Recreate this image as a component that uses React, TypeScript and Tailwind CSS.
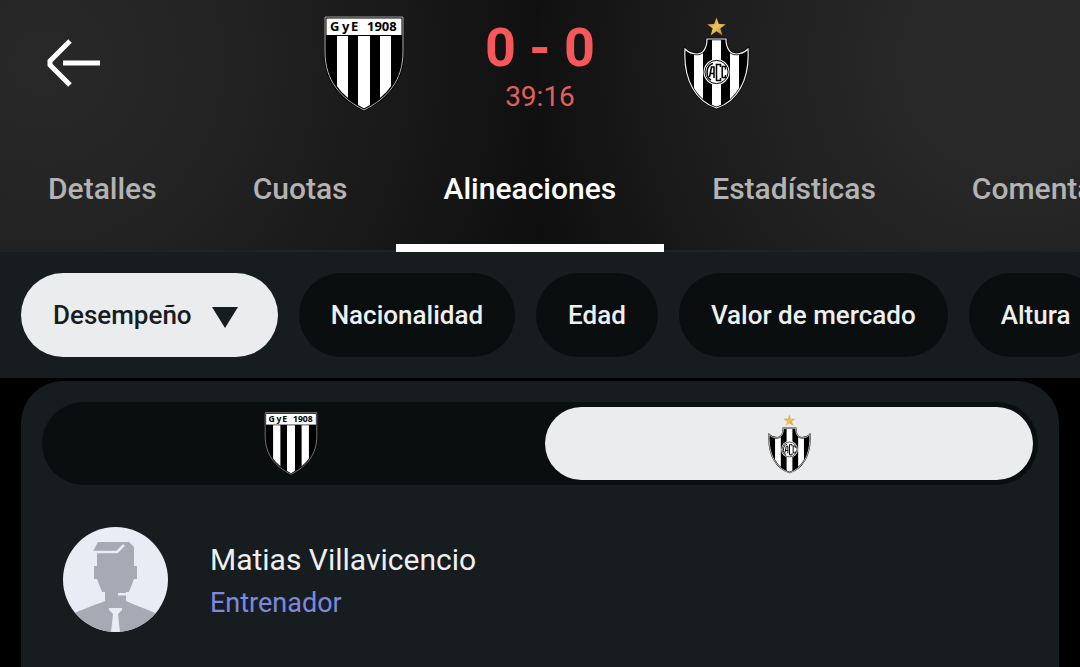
import React, { useState } from 'react';
import clsx from 'clsx';

const tabs = ['Detalles', 'Cuotas', 'Alineaciones', 'Estadísticas', 'Comentarios'];
const filters = ['Desempeño', 'Nacionalidad', 'Edad', 'Valor de mercado', 'Altura'];

function GimnasiaCrest({ id, className }: { id: string; className?: string }) {
  const shield = 'M1 1H79V36C79 64 64 82 40 94C16 82 1 64 1 36Z';
  return (
    <svg viewBox="0 0 80 95" className={className} role="img" aria-label="Gimnasia y Esgrima">
      <clipPath id={id}>
        <path d={shield} />
      </clipPath>
      <g clipPath={`url(#${id})`}>
        <rect width="80" height="95" fill="#000" />
        <rect x="2" y="2" width="76" height="17" fill="#fff" />
        <rect x="13" y="20" width="11" height="75" fill="#fff" />
        <rect x="34" y="20" width="12" height="75" fill="#fff" />
        <rect x="56" y="20" width="11" height="75" fill="#fff" />
      </g>
      <path d={shield} fill="none" stroke="#000" strokeWidth="3" />
      <path d={shield} fill="none" stroke="#b5b5b5" strokeWidth="1" />
      <g fontFamily='"Noto Sans", sans-serif' fontWeight="700" fontSize="13" fill="#000">
        <text x="6" y="15">G</text>
        <text x="18" y="15">y</text>
        <text x="27" y="15">E</text>
        <text x="43" y="15">1908</text>
      </g>
    </svg>
  );
}

function CentralCrest({ id, className }: { id: string; className?: string }) {
  const shield =
    'M24 22H43C43 31 47 37 53 37C58 37 62 35 65 32C67 64 53 85 33.5 91C14 85 0 64 2 32C5 35 9 37 14 37C20 37 24 31 24 22Z';
  return (
    <svg viewBox="0 0 67 93" className={className} role="img" aria-label="Central Córdoba">
      <defs>
        <clipPath id={id}>
          <path d={shield} />
        </clipPath>
        <linearGradient id={`${id}-gold`} x1="0" y1="0" x2="1" y2="1">
          <stop offset="0" stopColor="#a97b22" />
          <stop offset="0.5" stopColor="#edc75a" />
          <stop offset="1" stopColor="#b3842a" />
        </linearGradient>
      </defs>
      <path
        d="M33.5 0.5L35.8 7.1L42.8 7.3L37.3 11.6L39.3 18.2L33.5 14.3L27.7 18.2L29.7 11.6L24.2 7.3L31.2 7.1Z"
        fill={`url(#${id}-gold)`}
      />
      <g clipPath={`url(#${id})`}>
        <rect width="67" height="93" fill="#000" />
        <rect x="11" y="20" width="9" height="73" fill="#fff" />
        <rect x="29" y="20" width="9" height="73" fill="#fff" />
        <rect x="47" y="20" width="9" height="73" fill="#fff" />
      </g>
      <path d={shield} fill="none" stroke="#000" strokeWidth="2.5" />
      <path d={shield} fill="none" stroke="#f0f0f4" strokeWidth="1.2" />
      <circle cx="33.5" cy="55" r="13" fill="#fff" />
      <circle cx="33.5" cy="55" r="11.6" fill="#fff" stroke="#000" strokeWidth="1" />
      {/* interlaced monogram */}
      <g fill="none" stroke="#000" strokeWidth="1.5">
        <path d="M30 46.5C23 48 22 60 28 63" />
        <path d="M26.5 60L28.5 50H31V61M27.5 56.5H31" />
        <path d="M37.5 50V47.5H33.5V63.5H37.5V61" />
        <path d="M42.5 52.5V49.5H39.2V60.5H42.5V58" />
      </g>
    </svg>
  );
}

function CoachAvatar() {
  return (
    <svg viewBox="0 0 105 105" className="size-[105px] shrink-0 rounded-full" aria-hidden="true">
      <rect width="105" height="105" fill="#e8ecf4" />
      <path
        d="M35 15H66L71 20V39H74V52H71L66 65H63V74C74 79 84 82 92 86C98 89 102 90 105 92V105H0V92C14 84 29 79 42 74V65H39L34 52H31V39H34V26H29Z"
        fill="#a5aab5"
      />
      <path d="M28 25H54L61 18" fill="none" stroke="#e8ecf4" strokeWidth="2.5" />
      <path d="M55 66H63V68.5H55Z" fill="#e8ecf4" />
      <path d="M46 81H59V83L55 87L57 105H48L50 87L46 83Z" fill="#e8ecf4" />
    </svg>
  );
}

export default function App() {
  const [tab, setTab] = useState('Alineaciones');
  const [filter, setFilter] = useState('Desempeño');
  const [team, setTeam] = useState('away');

  return (
    <div className="min-h-screen overflow-hidden bg-black font-[Roboto,sans-serif] text-[#edf0f2]">
      <header className="border-b-2 border-[#202224] bg-[#0e0e0e] bg-[radial-gradient(circle_at_88%_25%,#292929_0%,#272727_25%,#1c1c1c_65%,transparent_100%),radial-gradient(circle_at_8%_25%,#282828_0%,#242424_30%,#181818_70%,transparent_100%)] bg-[length:50%_100%] bg-[position:100%_0,0_0] bg-no-repeat">
        <div className="grid h-[126px] grid-cols-[1fr_176px_176px_176px_1fr] items-center justify-items-center">
          <button aria-label="Volver" className="ml-[46px] justify-self-start">
            <svg viewBox="0 0 54 48" className="h-12 w-[54px]" fill="none" stroke="#fff" strokeWidth="5">
              <path d="M24 2L4 22V26L24 46" />
              <path d="M17 24H54" />
            </svg>
          </button>
          <GimnasiaCrest id="gye-head" className="h-[95px] w-20" />
          <div className="flex flex-col items-center pt-3 text-[#f5575a]">
            <div className="text-[54px] leading-[56px] font-bold">0 - 0</div>
            <div className="text-[28px] leading-[42px] text-[#e0605f]">39:16</div>
          </div>
          <CentralCrest id="acc-head" className="h-[93px] w-[67px]" />
        </div>
        <nav className="flex h-[124px]">
          {tabs.map((t) => (
            <button
              key={t}
              onClick={() => setTab(t)}
              className={clsx(
                'relative h-[126px] shrink-0 px-12 text-[30px] leading-[126px] font-medium',
                t === tab ? 'text-white' : 'text-[#b3b3b3]',
              )}
            >
              {t}
              {t === tab && <span className="absolute inset-x-0 bottom-0 h-2 bg-white" />}
            </button>
          ))}
        </nav>
      </header>

      <div className="mb-[3px] flex gap-[21px] bg-[#171c1f] p-[21px]">
        {filters.map((f) => (
          <button
            key={f}
            onClick={() => setFilter(f)}
            className={clsx(
              'flex h-[84px] shrink-0 items-center gap-5 rounded-full px-8 text-[26px] font-medium',
              f === filter ? 'bg-[#ebecee] text-[#171c1f]' : 'bg-[#0a0e0f]',
            )}
          >
            {f}
            {f === filter && (
              <svg viewBox="0 0 26 21" className="mt-1 mr-2 h-[21px] w-[26px]" fill="currentColor">
                <path d="M0 0H26L13 21Z" />
              </svg>
            )}
          </button>
        ))}
      </div>

      <main className="mx-[21px] min-h-[300px] rounded-t-[42px] bg-[#171c1f] p-[21px]">
        <div className="grid h-[83px] grid-cols-2 gap-[10px] rounded-full bg-[#0a0e0f] p-[5px]">
          <button
            aria-label="Local"
            onClick={() => setTeam('home')}
            className={clsx('flex items-center justify-center rounded-full', team === 'home' && 'bg-[#ebecee]')}
          >
            <GimnasiaCrest id="gye-tab" className="h-[63px] w-[54px]" />
          </button>
          <button
            aria-label="Visitante"
            onClick={() => setTeam('away')}
            className={clsx('flex items-center justify-center rounded-full', team === 'away' && 'bg-[#ebecee]')}
          >
            <CentralCrest id="acc-tab" className="h-[60px] w-[43px]" />
          </button>
        </div>

        <div className="mt-[42px] flex items-center gap-[42px] px-[21px]">
          <CoachAvatar />
          <div className="pt-[2px]">
            <div className="text-[30px] leading-[44px]">Matias Villavicencio</div>
            <div className="text-[27px] leading-[42px] text-[#8087e0]">Entrenador</div>
          </div>
        </div>
      </main>
    </div>
  );
}
